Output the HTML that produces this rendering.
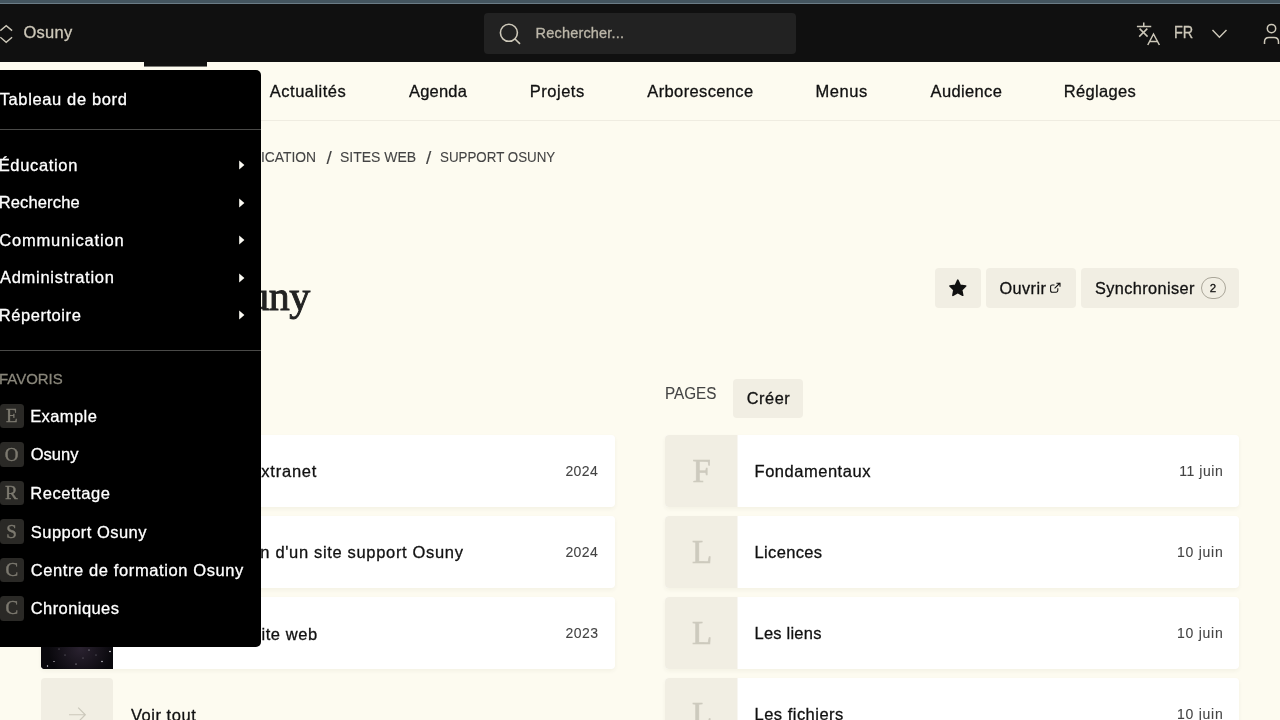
<!DOCTYPE html>
<html lang="fr">
<head>
<meta charset="utf-8">
<title>Support Osuny</title>
<style>
*{box-sizing:border-box;margin:0;padding:0}
html,body{width:1280px;height:720px;overflow:hidden}
body{background:#fdfbf0;font-family:"Liberation Sans",sans-serif;color:#111;position:relative}
#root{position:absolute;left:0;top:0;width:1280px;height:720px;overflow:hidden;will-change:transform}
.a{position:absolute}
.t{position:absolute;white-space:nowrap}
.f{font-family:"Liberation Sans",sans-serif;-webkit-text-stroke:0.3px}
.s{font-family:"Liberation Serif",serif;-webkit-text-stroke:0.4px}
.strip{left:0;top:0;width:1280px;height:4px;background:linear-gradient(#44555f 3px,#6b7c86 3px)}
.header{left:0;top:4px;width:1280px;height:58px;background:#101010}
.search{left:484px;top:12.5px;width:312px;height:41px;background:#222;border-radius:4px}
.navline{left:0;top:120px;width:1280px;height:1px;background:#efece1}
.tab{left:144px;top:62px;width:63px;height:4px;background:#111}
.btn{background:#f1eee3;border-radius:4px}
.card{height:72px;background:#fff;border-radius:4px;box-shadow:0 2px 4px rgba(60,50,20,.05)}
.th{position:absolute;left:0;top:0;width:73px;height:72px;background:linear-gradient(to right,#f1eee3 72px,#f8f6f1 72px);border-radius:4px 0 0 4px}
.menu{left:0;top:70px;width:261px;height:577px;background:#000;border-radius:0 5px 5px 0}
.hr{position:absolute;left:0;width:261px;height:1px;background:#4a4a48}
.fv{position:absolute;left:0;width:24px;height:24.5px;background:#2a2926;border-radius:3.5px}
</style>
</head>
<body>
<div id="root">
<div class="a strip"></div>
<div class="a header"></div>
<svg class="a" style="left:0;top:20px" width="16" height="28" viewBox="0 0 16 28"><path d="M0.3 10.6 L6.2 5.6 L12.1 10.6 M0.3 17.2 L6.2 22.4 L12.1 17.2" fill="none" stroke="#cdc8b9" stroke-width="1.4"/></svg>
<div class="a search"></div>
<svg class="a" style="left:496px;top:20px" width="28" height="28" viewBox="0 0 28 28"><circle cx="12.9" cy="12.8" r="8.5" fill="none" stroke="#cdc8b9" stroke-width="1.6"/><path d="M19 19 L24 23.8" stroke="#cdc8b9" stroke-width="1.6" fill="none"/></svg>
<svg class="a" style="left:1130px;top:16px" width="36" height="36" viewBox="0 0 36 36"><g fill="none" stroke="#cdc8b9" stroke-width="1.5"><path d="M6.9 10.5 H21.25"/><path d="M13.75 6.5 V10.5"/><path d="M9.6 12.6 L17.6 20.6"/><path d="M17.3 12.6 L9.2 20.6"/><path d="M17.75 29 L23.5 18 L29.4 29"/><path d="M19.6 25.5 H27.4"/></g></svg>
<svg class="a" style="left:1208px;top:24px" width="24" height="20" viewBox="0 0 24 20"><path d="M4.5 5.9 L11.4 13.3 L18.5 5.9" fill="none" stroke="#cdc8b9" stroke-width="1.4"/></svg>
<svg class="a" style="left:1258px;top:18px" width="22" height="30" viewBox="0 0 22 30"><g fill="none" stroke="#cdc8b9" stroke-width="1.5"><circle cx="13.5" cy="10.6" r="4.2"/><path d="M6.5 26 V24 Q6.5 19.5 11 19.5 H16 Q20.5 19.5 20.5 24 V26"/></g></svg>
<span class="t f" style="left:23.52px;top:22px;font-size:16.5px;line-height:20px;color:#cdc8b9;letter-spacing:0.232px">Osuny</span>
<span class="t f" style="left:535.61px;top:25px;font-size:14.5px;line-height:17px;color:#bcb7a9;letter-spacing:0.173px">Rechercher...</span>
<span class="t f" style="left:1174.12px;top:22px;font-size:16.5px;line-height:20px;color:#cdc8b9;transform:scaleX(0.8754);transform-origin:0 0">FR</span>

<div class="a navline"></div>
<div class="a tab"></div>
<div class="a" style="left:144px;top:66px;width:63px;height:1px;background:rgba(17,17,17,.55)"></div>

<div class="a btn" style="left:935px;top:268.4px;width:45.8px;height:39.4px"></div>
<svg class="a" style="left:947px;top:277px" width="22" height="22" viewBox="0 0 22 22"><path d="M10.8 3.2 L13.2 8.3 L18.7 9 L14.7 12.8 L15.7 18.3 L10.8 15.6 L5.9 18.3 L6.9 12.8 L2.9 9 L8.4 8.3 Z" fill="#111" stroke="#111" stroke-width="1.6" stroke-linejoin="round"/></svg>
<div class="a btn" style="left:985.6px;top:268.4px;width:90.6px;height:39.4px"></div>
<svg class="a" style="left:1049px;top:281px" width="14" height="14" viewBox="0 0 14 14"><g fill="none" stroke="#111" stroke-width="1.1"><path d="M8.8 7.3 V9.6 Q8.8 11.2 7.2 11.2 H3.2 Q1.6 11.2 1.6 9.6 V5.6 Q1.6 4 3.2 4 H5.5"/><path d="M5.6 7.4 L11 2 M7.4 2.2 H11 V5.8"/></g></svg>
<div class="a btn" style="left:1081.2px;top:268.2px;width:158px;height:39.6px"></div>
<div class="a" style="left:1201.2px;top:276.6px;width:24.4px;height:22.8px;border:1px solid #aaa699;border-radius:12px"></div>
<div class="a btn" style="left:733.1px;top:378.8px;width:70.2px;height:39.2px"></div>
<div class="a btn" style="left:154px;top:378.8px;width:70.2px;height:39.2px"></div>

<div class="a card" style="left:41px;top:435px;width:574px"><div class="th"></div></div>
<div class="a card" style="left:41px;top:516px;width:574px"><div class="th"></div></div>
<div class="a card" style="left:41px;top:597px;width:574px"><div class="th" style="background:#09080c;width:72px"></div></div>
<svg class="a" style="left:41px;top:597px;border-radius:4px 0 0 4px" width="72" height="72" viewBox="0 0 72 72"><defs><radialGradient id="nb" cx="0.55" cy="0.72" r="0.45"><stop offset="0" stop-color="#2a2230"/><stop offset="1" stop-color="#09080c"/></radialGradient></defs><rect width="72" height="72" fill="url(#nb)"/><g fill="#e8e6ee"><circle cx="69" cy="54.5" r="0.8"/><circle cx="13" cy="64.5" r="0.6"/><circle cx="61" cy="64.5" r="0.7"/><circle cx="6.5" cy="69" r="0.7"/><circle cx="48" cy="53" r="0.5"/><circle cx="24" cy="58" r="0.4"/><circle cx="35" cy="67" r="0.5"/><circle cx="55" cy="58" r="0.4"/><circle cx="18" cy="52" r="0.4"/><circle cx="42" cy="61" r="0.4"/><circle cx="30" cy="20" r="0.5"/><circle cx="50" cy="30" r="0.5"/><circle cx="12" cy="36" r="0.5"/></g></svg>
<div class="a btn" style="left:41px;top:678.4px;width:72.4px;height:72px"></div>
<svg class="a" style="left:66px;top:704.4px" width="24" height="22" viewBox="0 0 24 22"><path d="M3 10.75 H19 M12.2 3.6 L19.3 10.75 L12.2 17.9" fill="none" stroke="#cbc8bb" stroke-width="1.2"/></svg>

<div class="a card" style="left:665px;top:435px;width:574px"><div class="th"></div></div>
<div class="a card" style="left:665px;top:516px;width:574px"><div class="th"></div></div>
<div class="a card" style="left:665px;top:597px;width:574px"><div class="th"></div></div>
<div class="a card" style="left:665px;top:678px;width:574px"><div class="th"></div></div>
<span class="t f" style="left:269.87px;top:81px;font-size:16.5px;line-height:20px;color:#111;letter-spacing:0.477px">Actualités</span>
<span class="t f" style="left:408.97px;top:81px;font-size:16.5px;line-height:20px;color:#111;letter-spacing:0.189px">Agenda</span>
<span class="t f" style="left:529.85px;top:81px;font-size:16.5px;line-height:20px;color:#111;letter-spacing:0.499px">Projets</span>
<span class="t f" style="left:647.37px;top:81px;font-size:16.5px;line-height:20px;color:#111;letter-spacing:0.360px">Arborescence</span>
<span class="t f" style="left:815.45px;top:81px;font-size:16.5px;line-height:20px;color:#111;letter-spacing:0.556px">Menus</span>
<span class="t f" style="left:930.57px;top:81px;font-size:16.5px;line-height:20px;color:#111;letter-spacing:0.352px">Audience</span>
<span class="t f" style="left:1063.85px;top:81px;font-size:16.5px;line-height:20px;color:#111;letter-spacing:0.319px">Réglages</span>
<span class="t f" style="left:340.41px;top:149px;font-size:14.5px;line-height:17px;color:#444;-webkit-text-stroke:0.1px;transform:scaleX(0.9647);transform-origin:0 0">SITES WEB</span>
<span class="t f" style="left:440.19px;top:149px;font-size:14.5px;line-height:17px;color:#444;-webkit-text-stroke:0.1px;transform:scaleX(0.9205);transform-origin:0 0">SUPPORT OSUNY</span>
<span class="t f" style="left:326.55px;top:146px;font-size:19px;line-height:23px;color:#444;-webkit-text-stroke:0.1px">/</span>
<span class="t f" style="left:426.05px;top:146px;font-size:19px;line-height:23px;color:#444;-webkit-text-stroke:0.1px">/</span>
<span class="t f" style="left:197.09px;top:149px;font-size:14.5px;line-height:17px;color:#444;-webkit-text-stroke:0.1px;transform:scaleX(0.9563);transform-origin:0 0">COMMUNICATION</span>
<span class="t f" style="left:999.53px;top:278px;font-size:16.3px;line-height:20px;color:#111;letter-spacing:0.404px">Ouvrir</span>
<span class="t f" style="left:1095.06px;top:278px;font-size:16.3px;line-height:20px;color:#111;letter-spacing:0.390px">Synchroniser</span>
<span class="t f" style="left:1209.72px;top:281px;font-size:11.5px;line-height:14px;color:#111">2</span>
<span class="t f" style="left:664.85px;top:384px;font-size:16px;line-height:19px;color:#444;-webkit-text-stroke:0.1px;transform:scaleX(0.9538);transform-origin:0 0">PAGES</span>
<span class="t f" style="left:746.77px;top:388px;font-size:16.3px;line-height:20px;color:#111;letter-spacing:0.547px">Créer</span>
<span class="t f" style="left:135.57px;top:461px;font-size:16.5px;line-height:20px;color:#111;letter-spacing:0.794px">Configurer un extranet</span>
<span class="t f" style="left:202.44px;top:542px;font-size:16.5px;line-height:20px;color:#111;letter-spacing:0.668px">Création d&#39;un site support Osuny</span>
<span class="t f" style="left:178.34px;top:624px;font-size:16.5px;line-height:20px;color:#111;letter-spacing:0.603px">Créer un site web</span>
<span class="t f" style="left:130.93px;top:705px;font-size:16.5px;line-height:20px;color:#111;letter-spacing:0.532px">Voir tout</span>
<span class="t f" style="left:565.40px;top:463px;font-size:14px;line-height:17px;color:#444;letter-spacing:0.423px;-webkit-text-stroke:0.1px">2024</span>
<span class="t f" style="left:565.40px;top:544px;font-size:14px;line-height:17px;color:#444;letter-spacing:0.423px;-webkit-text-stroke:0.1px">2024</span>
<span class="t f" style="left:565.40px;top:625px;font-size:14px;line-height:17px;color:#444;letter-spacing:0.492px;-webkit-text-stroke:0.1px">2023</span>
<span class="t f" style="left:754.55px;top:461px;font-size:16.5px;line-height:20px;color:#111;letter-spacing:0.524px">Fondamentaux</span>
<span class="t f" style="left:754.55px;top:542px;font-size:16.5px;line-height:20px;color:#111;letter-spacing:0.333px">Licences</span>
<span class="t f" style="left:754.55px;top:623px;font-size:16.5px;line-height:20px;color:#111;letter-spacing:0.216px">Les liens</span>
<span class="t f" style="left:754.55px;top:704px;font-size:16.5px;line-height:20px;color:#111;letter-spacing:0.482px">Les fichiers</span>
<span class="t f" style="left:1179.23px;top:463px;font-size:14px;line-height:17px;color:#444;letter-spacing:0.543px;-webkit-text-stroke:0.1px">11 juin</span>
<span class="t f" style="left:1177.03px;top:544px;font-size:14px;line-height:17px;color:#444;letter-spacing:0.737px;-webkit-text-stroke:0.1px">10 juin</span>
<span class="t f" style="left:1177.03px;top:625px;font-size:14px;line-height:17px;color:#444;letter-spacing:0.737px;-webkit-text-stroke:0.1px">10 juin</span>
<span class="t f" style="left:1177.03px;top:706px;font-size:14px;line-height:17px;color:#444;letter-spacing:0.737px;-webkit-text-stroke:0.1px">10 juin</span>
<span class="t s" style="left:692.54px;top:451px;font-size:33px;line-height:40px;color:#cdcabe;-webkit-text-stroke:0.6px">F</span>
<span class="t s" style="left:692.04px;top:532px;font-size:33px;line-height:40px;color:#cdcabe;-webkit-text-stroke:0.6px">L</span>
<span class="t s" style="left:692.04px;top:613px;font-size:33px;line-height:40px;color:#cdcabe;-webkit-text-stroke:0.6px">L</span>
<span class="t s" style="left:692.04px;top:694px;font-size:33px;line-height:40px;color:#cdcabe;-webkit-text-stroke:0.6px">L</span>
<span class="t s" style="left:63.17px;top:271px;font-size:42px;line-height:50px;color:#222;letter-spacing:-0.500px;-webkit-text-stroke:0.9px">Support Osuny</span>
<span class="t f" style="left:147.77px;top:81px;font-size:16.5px;line-height:20px;color:#111;letter-spacing:0.541px">Accueil</span>
<span class="t f" style="left:42.07px;top:384px;font-size:16px;line-height:19px;color:#444;-webkit-text-stroke:0.1px;transform:scaleX(0.9651);transform-origin:0 0">ACTUALITÉS</span>
<span class="t f" style="left:167.77px;top:388px;font-size:16.3px;line-height:20px;color:#111;letter-spacing:0.547px">Créer</span>

<div class="a menu"></div>
<div class="a" style="left:0;top:0;width:261px;height:720px">
<div class="hr" style="top:129px"></div>
<div class="hr" style="top:350px"></div>
<svg class="a" style="left:236px;top:159.4px" width="12" height="12" viewBox="0 0 12 12"><path d="M3.2 1.6 L8.4 6 L3.2 10.4 Z" fill="#fbfaf3"/></svg>
<svg class="a" style="left:236px;top:196.8px" width="12" height="12" viewBox="0 0 12 12"><path d="M3.2 1.6 L8.4 6 L3.2 10.4 Z" fill="#fbfaf3"/></svg>
<svg class="a" style="left:236px;top:234.3px" width="12" height="12" viewBox="0 0 12 12"><path d="M3.2 1.6 L8.4 6 L3.2 10.4 Z" fill="#fbfaf3"/></svg>
<svg class="a" style="left:236px;top:271.9px" width="12" height="12" viewBox="0 0 12 12"><path d="M3.2 1.6 L8.4 6 L3.2 10.4 Z" fill="#fbfaf3"/></svg>
<svg class="a" style="left:236px;top:309.4px" width="12" height="12" viewBox="0 0 12 12"><path d="M3.2 1.6 L8.4 6 L3.2 10.4 Z" fill="#fbfaf3"/></svg>
<div class="fv" style="top:404px;height:24px"></div>
<div class="fv" style="top:442px;height:25px"></div>
<div class="fv" style="top:481px;height:24px"></div>
<div class="fv" style="top:519px;height:25px"></div>
<div class="fv" style="top:558px;height:24px"></div>
<div class="fv" style="top:596px;height:25px"></div>
<span class="t f" style="left:-0.37px;top:89px;font-size:16.5px;line-height:20px;color:#fff;letter-spacing:0.635px">Tableau de bord</span>
<span class="t f" style="left:-1.35px;top:155px;font-size:16.5px;line-height:20px;color:#fff;letter-spacing:0.667px">Éducation</span>
<span class="t f" style="left:-1.35px;top:192px;font-size:16.5px;line-height:20px;color:#fff;letter-spacing:0.149px">Recherche</span>
<span class="t f" style="left:-0.84px;top:230px;font-size:16.5px;line-height:20px;color:#fff;letter-spacing:0.823px">Communication</span>
<span class="t f" style="left:-0.03px;top:267px;font-size:16.5px;line-height:20px;color:#fff;letter-spacing:0.720px">Administration</span>
<span class="t f" style="left:-1.35px;top:305px;font-size:16.5px;line-height:20px;color:#fff;letter-spacing:0.572px">Répertoire</span>
<span class="t f" style="left:-1.23px;top:369px;font-size:15.5px;line-height:19px;color:#8a877b;transform:scaleX(0.9649);transform-origin:0 0">FAVORIS</span>
<span class="t f" style="left:30.20px;top:406px;font-size:16.5px;line-height:20px;color:#fff;letter-spacing:0.407px">Example</span>
<span class="t s" style="left:6.00px;top:404px;font-size:19px;line-height:23px;color:#7d7a70">E</span>
<span class="t f" style="left:30.77px;top:444px;font-size:16.5px;line-height:20px;color:#fff;letter-spacing:-0.018px">Osuny</span>
<span class="t s" style="left:4.74px;top:443px;font-size:19px;line-height:23px;color:#7d7a70">O</span>
<span class="t f" style="left:30.20px;top:483px;font-size:16.5px;line-height:20px;color:#fff;letter-spacing:0.565px">Recettage</span>
<span class="t s" style="left:5.00px;top:481px;font-size:19px;line-height:23px;color:#7d7a70">R</span>
<span class="t f" style="left:30.80px;top:522px;font-size:16.5px;line-height:20px;color:#fff;letter-spacing:0.472px">Support Osuny</span>
<span class="t s" style="left:6.27px;top:520px;font-size:19px;line-height:23px;color:#7d7a70">S</span>
<span class="t f" style="left:30.71px;top:560px;font-size:16.5px;line-height:20px;color:#fff;letter-spacing:0.607px">Centre de formation Osuny</span>
<span class="t s" style="left:5.40px;top:558px;font-size:19px;line-height:23px;color:#7d7a70">C</span>
<span class="t f" style="left:30.71px;top:598px;font-size:16.5px;line-height:20px;color:#fff;letter-spacing:0.428px">Chroniques</span>
<span class="t s" style="left:5.40px;top:596px;font-size:19px;line-height:23px;color:#7d7a70">C</span>
</div>
</div>
</body>
</html>
